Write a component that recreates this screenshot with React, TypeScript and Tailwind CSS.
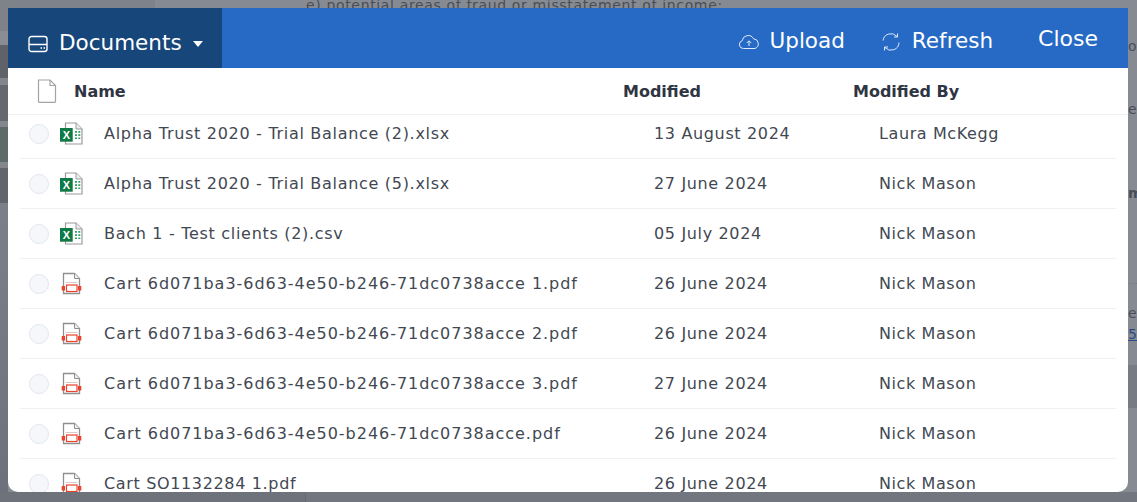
const rows = [
  { name: 'Alpha Trust 2020 - Trial Balance (2).xlsx', date: '13 August 2024', by: 'Laura McKegg', type: 'xls', tracking: 'tracking-[0.7px]' },
  { name: 'Alpha Trust 2020 - Trial Balance (5).xlsx', date: '27 June 2024', by: 'Nick Mason', type: 'xls', tracking: 'tracking-[0.7px]' },
  { name: 'Bach 1 - Test clients (2).csv', date: '05 July 2024', by: 'Nick Mason', type: 'xls', tracking: 'tracking-[0.7px]' },
  { name: 'Cart 6d071ba3-6d63-4e50-b246-71dc0738acce 1.pdf', date: '26 June 2024', by: 'Nick Mason', type: 'pdf', tracking: 'tracking-[0.97px]' },
  { name: 'Cart 6d071ba3-6d63-4e50-b246-71dc0738acce 2.pdf', date: '26 June 2024', by: 'Nick Mason', type: 'pdf', tracking: 'tracking-[0.97px]' },
  { name: 'Cart 6d071ba3-6d63-4e50-b246-71dc0738acce 3.pdf', date: '27 June 2024', by: 'Nick Mason', type: 'pdf', tracking: 'tracking-[0.97px]' },
  { name: 'Cart 6d071ba3-6d63-4e50-b246-71dc0738acce.pdf', date: '26 June 2024', by: 'Nick Mason', type: 'pdf', tracking: 'tracking-[0.97px]' },
  { name: 'Cart SO1132284 1.pdf', date: '26 June 2024', by: 'Nick Mason', type: 'pdf', tracking: 'tracking-[0.65px]' },
];

const XlsIcon = () => (
  <svg width="24" height="24" viewBox="0 0 24 24" className="shrink-0">
    <path d="M6.500 1h10.500l6 6v15h-16.500z" fill="#fff" stroke="#9a9a9a" strokeWidth="1.200" />
    <path d="M17 1v6h6" fill="#eee" stroke="#9a9a9a" strokeWidth="1" />
    <path d="M16 9h2v1.700h-2zM19.300 9h2v1.700h-2zM16 12.200h2v1.700h-2zM19.300 12.200h2v1.700h-2zM16 15.400h2v1.700h-2zM19.300 15.400h2v1.700h-2z" fill="#2f9e63" />
    <rect x="1" y="6" width="12.700" height="13.700" fill="#0f7a45" />
    <text x="7.300" y="17" textAnchor="middle" fontSize="11" fontWeight="700" fill="#fff" fontFamily="Liberation Sans, sans-serif">X</text>
  </svg>
);

const PdfIcon = () => (
  <svg width="24" height="24" viewBox="0 0 24 24" className="shrink-0">
    <path d="M4.500 1.500h11l5 5v15h-16z" fill="#fff" stroke="#8f8f8f" strokeWidth="1.300" />
    <path d="M15.500 1.500v5h5" fill="#eee" stroke="#8f8f8f" strokeWidth="1" />
    <path d="M6.500 10.500h12" stroke="#d9c9c4" strokeWidth="1.200" />
    <rect x="2.700" y="14" width="3.300" height="4.500" fill="#e8432d" />
    <rect x="19" y="14" width="3.300" height="4.500" fill="#e8432d" />
    <rect x="7.500" y="13" width="10.500" height="6.500" fill="#fff" stroke="#e8432d" strokeWidth="1.200" />
  </svg>
);

const App = () => {
  return (
    <div className="relative h-[502px] w-[1137px] overflow-hidden bg-[#868b93] font-['DejaVu_Sans',sans-serif]">
      {/* Page behind the dialog, dimmed */}
      <div className="absolute left-0 top-0 h-[8px] w-[155px] bg-[#7e828b]"></div>
      <div className="absolute inset-y-0 left-0 flex w-[8px] flex-col">
        <div className="h-[31px] bg-[#7f8289]"></div>
        <div className="h-[14px] bg-[#8a8d94]"></div>
        <div className="h-[33px] bg-[#5f6269]"></div>
        <div className="h-[7px] bg-[#83868d]"></div>
        <div className="h-[36px] bg-[#65686f]"></div>
        <div className="h-[6px] bg-[#83868d]"></div>
        <div className="h-[35px] bg-[#5d6b68]"></div>
        <div className="h-[6px] bg-[#83868d]"></div>
        <div className="h-[35px] bg-[#62656c]"></div>
        <div className="flex-1 bg-gradient-to-b from-[#7c808a] to-[#6b707a]"></div>
      </div>
      <div className="absolute inset-x-0 bottom-0 flex h-[10px]">
        <div className="w-[306px] border-r border-[#666a72] bg-[#6e727b]"></div>
        <div className="flex-1 bg-[#72767f]"></div>
      </div>
      <p className="absolute left-[306px] -top-[5px] whitespace-nowrap text-[14px] tracking-[0.65px] text-[#4a4d54]">e) potential areas of fraud or misstatement of income;</p>
      <div className="absolute left-[1128px] top-0 h-full w-[9px] overflow-hidden whitespace-nowrap text-[14px] text-[#4a4d54]">
        <span className="absolute left-0 top-[36px]">ol</span>
        <span className="absolute left-0 top-[99px]">ed</span>
        <span className="absolute left-0 top-[183px] font-bold">m</span>
        <div className="absolute left-0 top-[283px] w-full border-t border-dotted border-[#777a81]"></div>
        <span className="absolute left-0 top-[303px]">e</span>
        <span className="absolute left-0 top-[324px] text-[#2c4a85] underline">50</span>
        <div className="absolute left-0 top-[365px] h-[43px] w-full bg-[#777b84]"></div>
      </div>

      {/* Dialog */}
      <div className="absolute left-[8px] top-[8px] flex h-[484px] w-[1120px] flex-col overflow-hidden rounded-b-[10px] bg-white">
        <div className="flex h-[60px] shrink-0 items-center bg-[#266ac6] text-white">
          <div className="flex h-full w-[214px] items-center gap-[11px] bg-[#16467a] pl-[20px] pt-[11px]">
            <svg width="20" height="18" viewBox="0 0 20 18" fill="none" stroke="#fff" strokeWidth="1.400">
              <rect x="1" y="1.500" width="18" height="15" rx="2.500" />
              <path d="M1 9.500h18" />
              <path d="M12.500 13h1.500M15.500 13h1.500" />
            </svg>
            <span className="text-[21.500px]">Documents</span>
            <svg width="10" height="6" viewBox="0 0 10 6"><path d="M0 0h10L5 6z" fill="#fff" /></svg>
          </div>
          <div className="flex flex-1 items-center justify-end">
            <div className="flex items-center gap-[10px] pt-[7px]">
              <svg width="22" height="16" viewBox="0 0 22 16" fill="none" stroke="#dfe9f7" strokeWidth="1">
                <path d="M5.500 14.500H5a4 4 0 0 1-.8-7.800A6 6 0 0 1 15.500 4.800 5 5 0 0 1 17 14.500z" />
                <path d="M11 12V7M8.800 9L11 6.800 13.200 9" />
              </svg>
              <span className="text-[21.500px]">Upload</span>
            </div>
            <div className="ml-[36px] flex items-center gap-[11px] pt-[7px]">
              <svg width="20" height="20" viewBox="0 0 20 20" fill="none" stroke="#dfe9f7" strokeWidth="1">
                <path d="M2 8.500A8 8 0 0 1 16 4.500" />
                <path d="M18 10.500A8 8 0 0 1 4 15.500" />
                <path d="M16.500 1.500v3.500H13M3.500 18.500V15H7" />
              </svg>
              <span className="text-[21.500px]">Refresh</span>
            </div>
            <span className="ml-[45px] mr-[30px] text-[22px]">Close</span>
          </div>
        </div>

        <div className="flex h-[47px] shrink-0 items-center border-b border-[#eef0f2] pt-[2px] text-[16px] font-bold text-[#2f3542]">
          <svg width="20" height="24" viewBox="0 0 20 24" fill="none" stroke="#a3a3a3" strokeWidth="1.200" className="ml-[29px] -mt-[2px]">
            <path d="M1.500 1h11.500l5.500 5.500V22.500a.8.8 0 0 1-.8.800H2.300a.8.8 0 0 1-.8-.8z" />
            <path d="M13 1v5.500h5.500" />
          </svg>
          <span className="ml-[17px] w-[549px]">Name</span>
          <span className="w-[230px]">Modified</span>
          <span>Modified By</span>
        </div>

        <div className="min-h-0 flex-1 overflow-hidden pl-[12px] pr-[12px]">
          {rows.map((row, index) => (
            <div key={index} className={`flex h-[50px] items-center border-b border-[#eef0f2] text-[16px] text-[#424852] ${index === 0 ? '-mt-[6px]' : ''}`}>
              <span className="ml-[9px] h-[20px] w-[20px] shrink-0 rounded-full border border-[#e2e6ee] bg-[#f5f7fa]"></span>
              <span className="ml-[9px] flex w-[26px] shrink-0 justify-center">
                {row.type === 'xls' ? <XlsIcon /> : <PdfIcon />}
              </span>
              <span className={`ml-[20px] w-[550px] shrink-0 whitespace-nowrap ${row.tracking}`}>{row.name}</span>
              <span className="w-[225px] shrink-0 whitespace-nowrap tracking-[0.65px]">{row.date}</span>
              <span className="whitespace-nowrap tracking-[0.6px]">{row.by}</span>
            </div>
          ))}
        </div>
      </div>
    </div>
  );
};

export default App;
